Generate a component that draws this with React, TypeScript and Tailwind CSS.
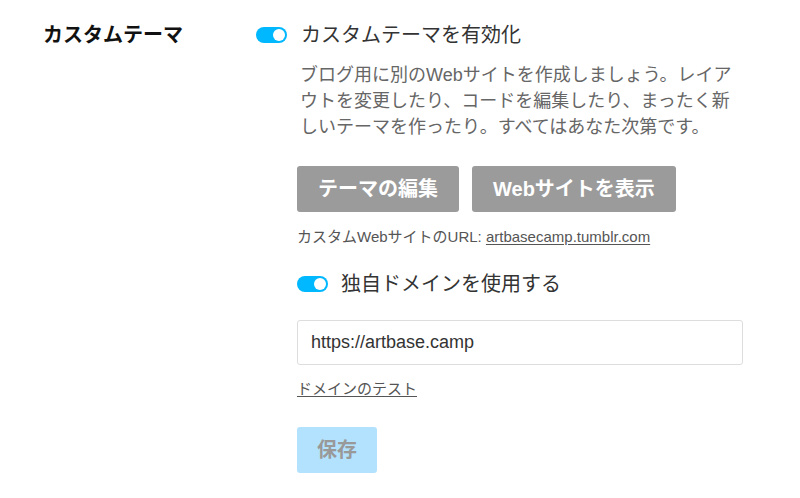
import React from "react";

const font = { fontFamily: '"Liberation Sans", "Noto Sans CJK JP", "Noto Sans", sans-serif' };

function Toggle() {
  return (
    <div className="w-[31px] h-[16px] rounded-full bg-[#00b8ff] flex items-center justify-end pr-[2px] shrink-0">
      <div className="w-[12px] h-[12px] rounded-full bg-white" />
    </div>
  );
}

export default function App() {
  return (
    <div
      className="w-[800px] h-[498px] bg-white flex pt-[22px] pl-[43px] antialiased"
      style={font}
    >
      <div className="w-[213px] text-[20px] leading-[26px] font-bold text-[#111]">
        カスタムテーマ
      </div>
      <div className="flex flex-col">
        <div className="flex items-center gap-[14px]">
          <Toggle />
          <span className="text-[20px] leading-[26px] text-[#333]">
            カスタムテーマを有効化
          </span>
        </div>
        <div className="flex flex-col ml-[41px] w-[450px]">
          <p className="mt-[14px] text-[18px] leading-[26px] text-[#666] pl-[3px]">
            ブログ用に別のWebサイトを作成しましょう。レイアウトを変更したり、コードを編集したり、まったく新しいテーマを作ったり。すべてはあなた次第です。
          </p>
          <div className="flex gap-[13px] mt-[26px]">
            <button className="h-[46px] px-[21px] rounded-[3px] bg-[#9b9b9b] text-white text-[20px] font-bold leading-[26px]">
              テーマの編集
            </button>
            <button className="h-[46px] px-[21px] rounded-[3px] bg-[#9b9b9b] text-white text-[20px] font-bold leading-[26px]">
              Webサイトを表示
            </button>
          </div>
          <div className="mt-[14px] text-[15px] leading-[21px] text-[#555]">
            カスタムWebサイトのURL:{" "}
            <span className="underline underline-offset-2">artbasecamp.tumblr.com</span>
          </div>
          <div className="flex items-center gap-[13px] mt-[24px]">
            <Toggle />
            <span className="text-[20px] leading-[26px] text-[#333]">
              独自ドメインを使用する
            </span>
          </div>
          <div className="mt-[23px] w-[446px] h-[45px] border border-[#ddd] rounded-[3px] flex items-center px-[13px] text-[18px] text-[#333]">
            https://artbase.camp
          </div>
          <div className="mt-[13px] text-[15px] leading-[22px] text-[#555]">
            <span className="underline underline-offset-2">ドメインのテスト</span>
          </div>
          <div className="mt-[27px]">
            <button className="h-[46px] px-[20px] rounded-[3px] bg-[#b3e2fe] text-[#999] text-[20px] font-bold leading-[26px]">
              保存
            </button>
          </div>
        </div>
      </div>
    </div>
  );
}
